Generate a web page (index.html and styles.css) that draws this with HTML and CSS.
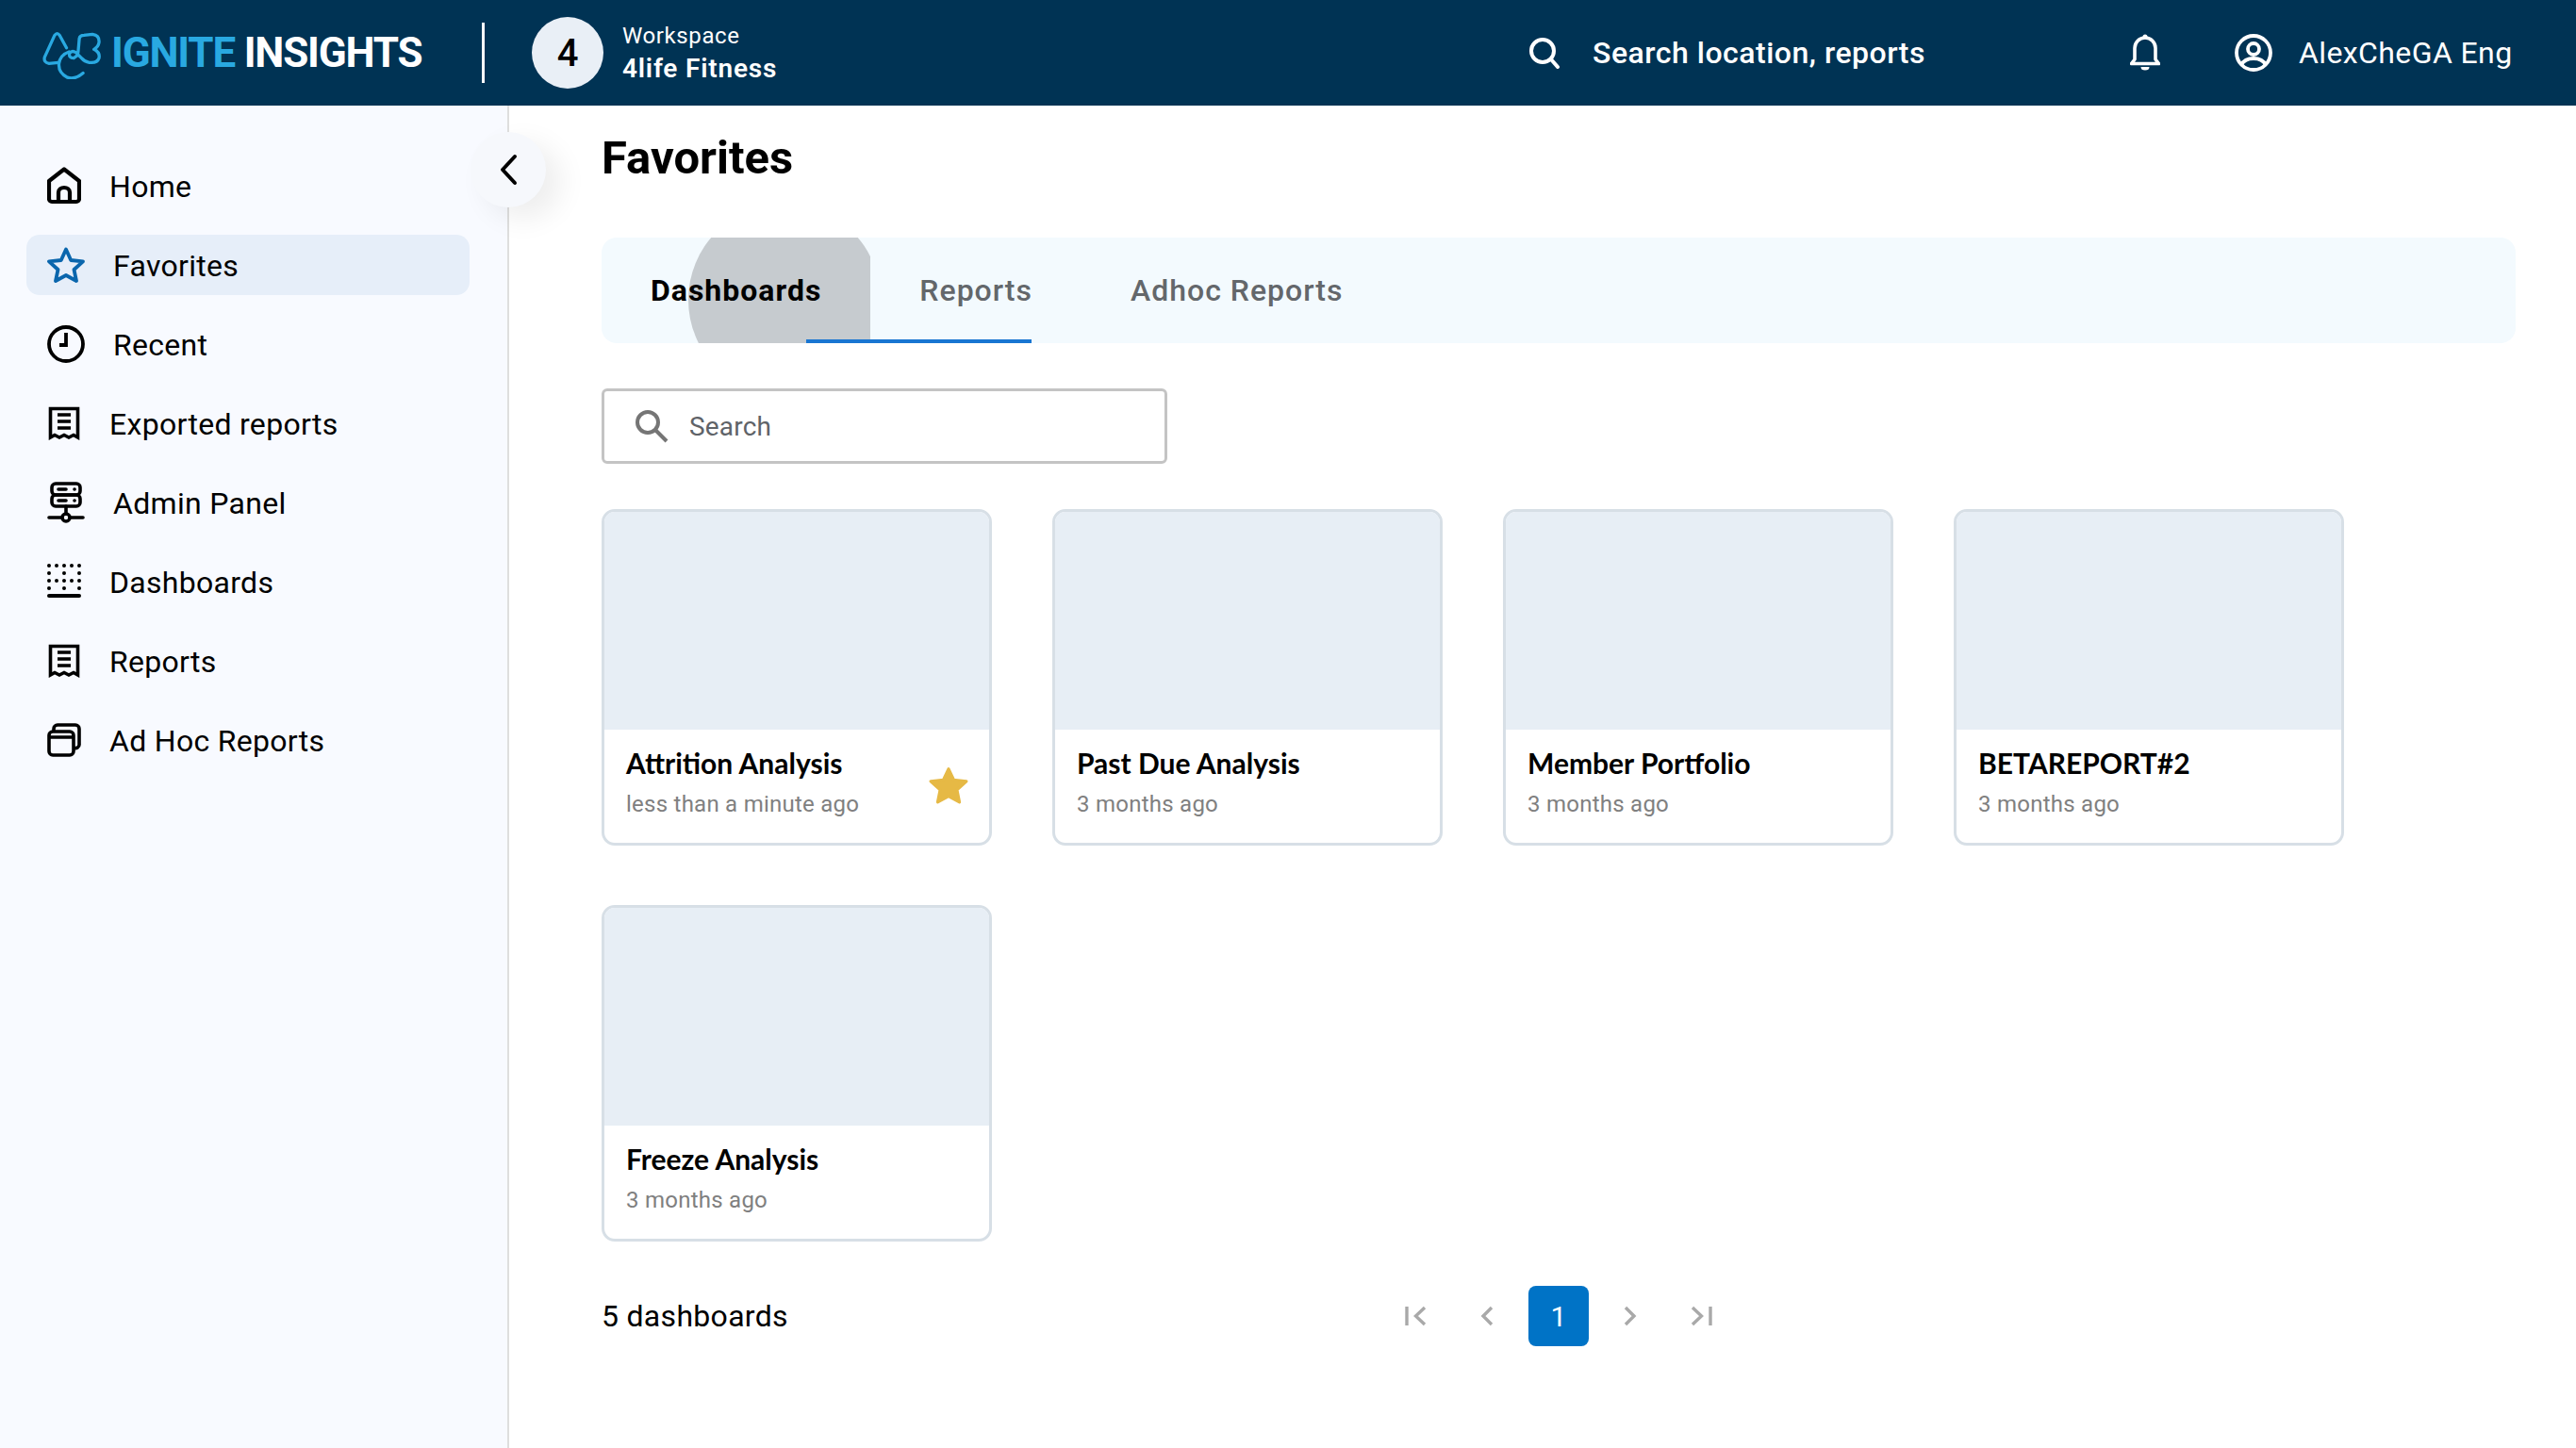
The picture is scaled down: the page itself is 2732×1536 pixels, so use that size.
FILE: index.html
```html
<!DOCTYPE html>
<html lang="en">
<head>
  <meta charset="UTF-8">
  <title>Favorites</title>
  <link rel="stylesheet" href="styles.css">
</head>
<body>
  <header class="topbar">
    <div class="brand">
      <svg class="brand-mark" viewBox="45 30 190 165" fill="none" stroke="#29a9e1" stroke-width="10" stroke-linecap="round" stroke-linejoin="round">
        <path d="M122 95 L100 55 Q92 44 84 55 L52 125 Q48 142 66 145 L96 142"/>
        <path d="M175 176 Q150 198 125 190 Q95 175 98 145 Q102 118 130 108"/>
        <path d="M160 100 L163 65 Q165 55 178 55 L205 52 Q228 55 226 78 Q224 92 210 100 Q230 110 226 128 Q220 145 195 142 Q180 140 170 128 L152 110 Q140 102 132 112 Q128 128 145 128 Q160 122 160 100"/>
      </svg>
      <span class="brand-name"><span class="brand-blue">IGNITE</span> INSIGHTS</span>
    </div>
    <div class="workspace">
      <div class="ws-badge">4</div>
      <div class="ws-text">
        <div class="ws-label">Workspace</div>
        <div class="ws-name">4life Fitness</div>
      </div>
    </div>
    <div class="top-search">
      <svg width="34" height="34" viewBox="0 0 34 34" fill="none" stroke="#fff" stroke-width="4" stroke-linecap="round"><circle cx="15" cy="15" r="12"/><path d="M24 24 L31 32"/></svg>
      <span>Search location, reports</span>
    </div>
    <svg class="bell" width="32" height="40" viewBox="0 0 32 40" fill="none" stroke="#fff" stroke-width="3.6" stroke-linejoin="round">
      <path d="M1.5 31.5 H30.5 L27 27 V15 a11 11 0 0 0 -22 0 V27 Z"/>
      <circle cx="16" cy="3" r="2.5" fill="#fff" stroke="none"/>
      <path d="M11.5 35 h9 a4.5 3.5 0 0 1 -9 0" fill="#fff" stroke="none"/>
    </svg>
    <div class="user">
      <svg width="40" height="40" viewBox="0 0 40 40" fill="none" stroke="#fff" stroke-width="3.8"><circle cx="20" cy="20" r="18"/><circle cx="20" cy="16" r="6"/><path d="M7 33 C10 27 15 26 20 26 S30 27 33 33"/></svg>
      <span>AlexCheGA Eng</span>
    </div>
  </header>

  <div class="layout">
    <aside class="sidebar">
      <nav class="nav">
        <a class="nav-item">
          <svg width="36" height="40" viewBox="0 0 36 40" fill="none" stroke="#000" stroke-width="4.2" stroke-linejoin="round"><path d="M2 15 L18 2.5 L34 15 V34 a3 3 0 0 1 -3 3 H5 a3 3 0 0 1 -3 -3 Z"/><path d="M12 37 V27 a6 5 0 0 1 12 0 V37"/></svg>
          <span>Home</span>
        </a>
        <a class="nav-item active">
          <svg width="40" height="38" viewBox="0 0 40 38" fill="none" stroke="#0a66ad" stroke-width="3.8" stroke-linejoin="round"><path d="M20 2.5 L25.2 14 L38 15.3 L28.5 24 L31 36 L20 30 L9 36 L11.5 24 L2 15.3 L14.8 14 Z"/></svg>
          <span>Favorites</span>
        </a>
        <a class="nav-item">
          <svg width="40" height="40" viewBox="0 0 40 40" fill="none" stroke="#000" stroke-width="3.8"><circle cx="20" cy="20" r="18"/><path d="M20 8 V21 H13"/></svg>
          <span>Recent</span>
        </a>
        <a class="nav-item">
          <svg width="36" height="36" viewBox="0 0 36 36" fill="none" stroke="#000" stroke-width="3.6"><path d="M3.5 2.5 H32.5 V33 L28 30.5 L23 33 L18 30.5 L13 33 L8 30.5 L3.5 33 Z"/><path d="M11 9 H25 M11 16 H25 M11 23 H25"/></svg>
          <span>Exported reports</span>
        </a>
        <a class="nav-item">
          <svg width="40" height="44" viewBox="0 0 40 44" fill="none" stroke="#000" stroke-width="3.6" stroke-linecap="round"><rect x="5" y="2" width="30" height="12" rx="4"/><rect x="5" y="14" width="30" height="12" rx="4"/><path d="M12 8 H20 M12 20 H20 M29 8 H29.1 M29 20 H29.1"/><path d="M20 26 V34 M2 38 H15 M25 38 H38"/><circle cx="20" cy="38" r="4"/></svg>
          <span>Admin Panel</span>
        </a>
        <a class="nav-item">
          <svg width="36" height="38" viewBox="0 0 36 38" fill="#000">
            <circle cx="2" cy="2" r="2"/><circle cx="10" cy="2" r="2"/><circle cx="18" cy="2" r="2"/><circle cx="26" cy="2" r="2"/><circle cx="34" cy="2" r="2"/>
            <circle cx="2" cy="10" r="2"/><circle cx="18" cy="10" r="2"/><circle cx="34" cy="10" r="2"/>
            <circle cx="2" cy="18" r="2"/><circle cx="10" cy="18" r="2"/><circle cx="18" cy="18" r="2"/><circle cx="26" cy="18" r="2"/><circle cx="34" cy="18" r="2"/>
            <circle cx="2" cy="26" r="2"/><circle cx="18" cy="26" r="2"/><circle cx="34" cy="26" r="2"/>
            <rect x="0" y="32" width="36" height="4" rx="2"/>
          </svg>
          <span>Dashboards</span>
        </a>
        <a class="nav-item">
          <svg width="36" height="36" viewBox="0 0 36 36" fill="none" stroke="#000" stroke-width="3.6"><path d="M3.5 2.5 H32.5 V33 L28 30.5 L23 33 L18 30.5 L13 33 L8 30.5 L3.5 33 Z"/><path d="M11 9 H25 M11 16 H25 M11 23 H25"/></svg>
          <span>Reports</span>
        </a>
        <a class="nav-item">
          <svg width="36" height="36" viewBox="0 0 36 36" fill="none" stroke="#000" stroke-width="3.6" stroke-linejoin="round"><rect x="2" y="9" width="26" height="25" rx="4"/><path d="M2 15 H28 M7 9 V6 a4 4 0 0 1 4 -4 H30 a4 4 0 0 1 4 4 V22 a4 4 0 0 1 -6 4"/></svg>
          <span>Ad Hoc Reports</span>
        </a>
      </nav>
      <button class="collapse">
        <svg width="20" height="34" viewBox="0 0 20 34" fill="none" stroke="#000" stroke-width="4" stroke-linecap="round" stroke-linejoin="round"><path d="M17 3 L4 17 L17 31"/></svg>
      </button>
    </aside>

    <main class="content">
      <h1>Favorites</h1>

      <div class="tabs">
        <div class="tab selected"><i class="ripple"></i><span>Dashboards</span></div>
        <div class="tab"><span>Reports</span></div>
        <div class="tab"><span>Adhoc Reports</span></div>
        <i class="tab-line"></i>
      </div>

      <div class="search">
        <svg width="36" height="36" viewBox="0 0 36 36" fill="none" stroke="#757575" stroke-width="4"><circle cx="14" cy="14" r="11"/><path d="M22 22 L34 34"/></svg>
        <span>Search</span>
      </div>

      <div class="cards">
        <div class="card">
          <div class="thumb"></div>
          <div class="card-body">
            <div>
              <div class="card-title">Attrition Analysis</div>
              <div class="card-time">less than a minute ago</div>
            </div>
            <svg class="card-star" width="42" height="40" viewBox="0 0 40 38" fill="#e6b945" stroke="#e6b945" stroke-width="3" stroke-linejoin="round"><path d="M20 2.5 L25.2 13.5 L38 15 L28.5 23.5 L31 36 L20 30 L9 36 L11.5 23.5 L2 15 L14.8 13.5 Z"/></svg>
          </div>
        </div>
        <div class="card">
          <div class="thumb"></div>
          <div class="card-body">
            <div>
              <div class="card-title">Past Due Analysis</div>
              <div class="card-time">3 months ago</div>
            </div>
          </div>
        </div>
        <div class="card">
          <div class="thumb"></div>
          <div class="card-body">
            <div>
              <div class="card-title">Member Portfolio</div>
              <div class="card-time">3 months ago</div>
            </div>
          </div>
        </div>
        <div class="card">
          <div class="thumb"></div>
          <div class="card-body">
            <div>
              <div class="card-title">BETAREPORT#2</div>
              <div class="card-time">3 months ago</div>
            </div>
          </div>
        </div>
        <div class="card">
          <div class="thumb"></div>
          <div class="card-body">
            <div>
              <div class="card-title">Freeze Analysis</div>
              <div class="card-time">3 months ago</div>
            </div>
          </div>
        </div>
      </div>

      <div class="footer">
        <div class="total">5 dashboards</div>
        <div class="pager">
          <span class="page"><svg width="24" height="24" viewBox="0 0 24 24" fill="none" stroke="#a9a9a9" stroke-width="3.4"><path d="M3 2 V22 M22 3 L12.5 12 L22 21"/></svg></span>
          <span class="page"><svg width="24" height="24" viewBox="0 0 24 24" fill="none" stroke="#a9a9a9" stroke-width="3.4"><path d="M17 3 L8 12 L17 21"/></svg></span>
          <span class="page current">1</span>
          <span class="page"><svg width="24" height="24" viewBox="0 0 24 24" fill="none" stroke="#a9a9a9" stroke-width="3.4"><path d="M7 3 L16 12 L7 21"/></svg></span>
          <span class="page"><svg width="24" height="24" viewBox="0 0 24 24" fill="none" stroke="#a9a9a9" stroke-width="3.4"><path d="M21 2 V22 M2 3 L11.5 12 L2 21"/></svg></span>
        </div>
      </div>
    </main>
  </div>
</body>
</html>
```

FILE: styles.css
```css
body {
  margin: 0;
  font-family: Roboto, "Liberation Sans", sans-serif;
  color: #000;
  background: #fff;
}

/* top bar */
.topbar {
  display: flex;
  align-items: center;
  height: 112px;
  background: #003354;
  color: #fff;
}
.brand {
  display: flex;
  align-items: center;
  width: 514px;
  height: 64px;
  padding-left: 45px;
  box-sizing: border-box;
  border-right: 3px solid #fff;
}
.brand-mark { width: 63px; height: 55px; margin-right: 10px; }
.brand-name {
  font-size: 44px;
  font-weight: 700;
  letter-spacing: -1.2px;
  white-space: nowrap;
}
.brand-blue { color: #29a9e1; }

.workspace { display: flex; align-items: center; margin-left: 50px; width: 1057px; }
.ws-badge {
  width: 76px;
  height: 76px;
  border-radius: 50%;
  background: #e9eff6;
  color: #000;
  font-size: 40px;
  font-weight: 500;
  display: flex;
  align-items: center;
  justify-content: center;
}
.ws-text { margin: -2px 0 0 20px; }
.ws-label { font-size: 24px; letter-spacing: 0.6px; line-height: 34px; }
.ws-name { font-size: 28px; font-weight: 600; letter-spacing: 0.8px; line-height: 35px; }

.top-search { display: flex; align-items: center; gap: 34px; width: 638px; font-size: 32px; font-weight: 500; letter-spacing: 0.5px; }
.bell { margin-right: 79px; }
.user { display: flex; align-items: center; gap: 28px; font-size: 32px; letter-spacing: 0.4px; }

/* sidebar */
.layout { display: flex; min-height: 1424px; }
.sidebar {
  position: relative;
  width: 540px;
  box-sizing: border-box;
  background: #f8faff;
  border-right: 2px solid #dedede;
  padding: 53px 0 0 28px;
}
.nav { display: flex; flex-direction: column; gap: 20px; width: 470px; }
.nav-item {
  display: flex;
  align-items: center;
  gap: 30px;
  height: 64px;
  padding-left: 22px;
  border-radius: 14px;
  font-size: 32px;
  letter-spacing: 0.3px;
}
.nav-item span { padding-top: 2px; }
.nav-item.active { background: #e6eef9; }

.collapse {
  position: absolute;
  top: 28px;
  right: -41px;
  width: 80px;
  height: 80px;
  padding: 0;
  border: none;
  border-radius: 50%;
  background: #f6f8fc;
  box-shadow: 16px 12px 30px rgba(0, 0, 0, 0.07);
  display: flex;
  align-items: center;
  justify-content: center;
}

/* main column */
.content { flex: 1; padding: 28px 64px 0 98px; }
h1 { margin: 0 0 56px; font-size: 49px; line-height: 56px; font-weight: 700; }

.tabs {
  position: relative;
  display: flex;
  height: 112px;
  background: #f3fafe;
  border-radius: 16px;
  overflow: hidden;
}
.tab {
  position: relative;
  overflow: hidden;
  display: flex;
  align-items: center;
  padding: 0 52px;
  font-size: 32px;
  font-weight: 500;
  letter-spacing: 1px;
  color: #63676b;
}
.tab span { position: relative; }
.tab.selected { color: #000; font-weight: 700; }
.ripple {
  position: absolute;
  left: 92px;
  top: -36px;
  width: 204px;
  height: 204px;
  border-radius: 50%;
  background: #c6cbcf;
}
.tab-line {
  position: absolute;
  left: 217px;
  bottom: 0;
  width: 239px;
  height: 4px;
  background: #1976d2;
}

.search {
  display: flex;
  align-items: center;
  gap: 22px;
  width: 600px;
  height: 80px;
  box-sizing: border-box;
  margin: 48px 0;
  padding-left: 32px;
  border: 3px solid #c4c4c4;
  border-radius: 6px;
  font-size: 28px;
  letter-spacing: 0.2px;
  color: #5f6368;
}

.cards {
  display: grid;
  grid-template-columns: repeat(4, 414px);
  column-gap: 64px;
  row-gap: 63px;
}
.card {
  height: 357px;
  box-sizing: border-box;
  border: 3px solid #d7dfe6;
  border-radius: 14px;
  overflow: hidden;
}
.thumb { height: 231px; background: #e7eef5; }
.card-body {
  display: flex;
  justify-content: space-between;
  align-items: center;
  padding: 0 22px 4px 23px;
  height: 120px;
  box-sizing: border-box;
}
.card-title { font-family: Lato, sans-serif; font-size: 30px; font-weight: 700; line-height: 36px; margin-top: -2px; }
.card-time { margin-top: 8px; font-size: 24px; line-height: 36px; color: #808080; letter-spacing: 0.25px; }
.card-star { margin-top: 2px; }

.footer {
  display: grid;
  grid-template-columns: 1fr auto 1fr;
  align-items: center;
  margin-top: 47px;
}
.total { font-size: 32px; letter-spacing: 0.3px; }
.pager { display: flex; gap: 12px; }
.page {
  width: 64px;
  height: 64px;
  display: flex;
  align-items: center;
  justify-content: center;
  border-radius: 8px;
  font-size: 30px;
}
.page.current { background: #0073c6; color: #fff; }
```
